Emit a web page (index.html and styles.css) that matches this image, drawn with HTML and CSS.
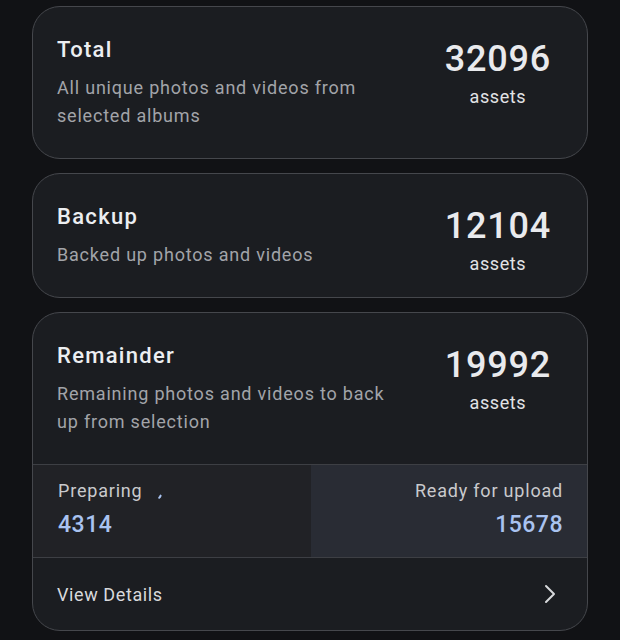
FILE: index.html
```html
<!DOCTYPE html>
<html lang="en">
<head>
    <meta charset="UTF-8">
    <meta name="viewport" content="width=device-width, initial-scale=1.0">
    <title>Backup status</title>
    <link rel="stylesheet" href="styles.css">
</head>
<body>
    <div class="cards">
        <div class="card">
            <div class="card-main">
                <div class="card-text">
                    <h2>Total</h2>
                    <p>All unique photos and videos from selected albums</p>
                </div>
                <div class="count">
                    <span class="count-num">32096</span>
                    <span class="count-unit">assets</span>
                </div>
            </div>
        </div>

        <div class="card">
            <div class="card-main">
                <div class="card-text">
                    <h2>Backup</h2>
                    <p>Backed up photos and videos</p>
                </div>
                <div class="count">
                    <span class="count-num">12104</span>
                    <span class="count-unit">assets</span>
                </div>
            </div>
        </div>

        <div class="card">
            <div class="card-main">
                <div class="card-text">
                    <h2>Remainder</h2>
                    <p>Remaining photos and videos to back up from selection</p>
                </div>
                <div class="count">
                    <span class="count-num">19992</span>
                    <span class="count-unit">assets</span>
                </div>
            </div>

            <div class="split">
                <div class="split-cell">
                    <div class="split-label">
                        Preparing
                        <svg class="spinner" width="14" height="14" viewBox="0 0 14 14">
                            <path d="M5.2 11.8 A5 5 0 0 0 6.6 9.6" fill="none" stroke="#a9c3f0" stroke-width="2" stroke-linecap="round"/>
                        </svg>
                    </div>
                    <div class="split-num">4314</div>
                </div>
                <div class="split-cell ready">
                    <div class="split-label">Ready for upload</div>
                    <div class="split-num">15678</div>
                </div>
            </div>

            <div class="details">
                <span>View Details</span>
                <svg width="14" height="22" viewBox="0 0 14 22">
                    <polyline points="3,3 11,11 3,19" fill="none" stroke="#d8d9dc" stroke-width="2" stroke-linecap="round" stroke-linejoin="round"/>
                </svg>
            </div>
        </div>
    </div>
</body>
</html>
```

FILE: styles.css
```css
* {
    margin: 0;
    padding: 0;
    box-sizing: border-box;
}

body {
    font-family: Roboto, 'Liberation Sans', sans-serif;
    background-color: #111215;
    color: #e6e7ea;
    padding: 6px 32px;
}

.cards {
    display: flex;
    flex-direction: column;
    gap: 14px;
}

.card {
    background-color: #1b1d21;
    border: 1px solid #45474c;
    border-radius: 28px;
    overflow: hidden;
}

.card-main {
    display: flex;
    justify-content: space-between;
    align-items: flex-start;
    padding: 28px 36px 21px 24px;
}

.card-text {
    width: 340px;
    padding-bottom: 7px;
}

.card-text h2 {
    font-size: 22px;
    font-weight: 500;
    line-height: 30px;
    letter-spacing: 1.3px;
    color: #eceef1;
    margin-bottom: 9px;
}

.card-text p {
    font-size: 18px;
    line-height: 28px;
    letter-spacing: 0.8px;
    color: #a2a4a9;
}

.count {
    display: flex;
    flex-direction: column;
    align-items: center;
    padding-top: 5px;
}

.count-num {
    font-size: 36px;
    font-weight: 500;
    line-height: 38px;
    letter-spacing: 0.8px;
    color: #e9eaed;
    margin-bottom: 7px;
}

.count-unit {
    font-size: 18px;
    line-height: 24px;
    letter-spacing: 0.6px;
    color: #e2e3e6;
}

.split {
    display: grid;
    grid-template-columns: 278px 1fr;
    border-top: 1px solid #3d3f44;
    border-bottom: 1px solid #3d3f44;
}

.split-cell {
    background-color: #212226;
    padding: 13px 24px 15px 25px;
}

.split-cell.ready {
    background-color: #292c34;
    text-align: right;
}

.split-label {
    font-size: 18px;
    line-height: 26px;
    letter-spacing: 0.8px;
    color: #c9cacd;
    display: flex;
    align-items: center;
    gap: 12px;
}

.ready .split-label {
    justify-content: flex-end;
}

.spinner {
    margin-top: 4px;
}

.split-num {
    font-size: 23px;
    font-weight: 500;
    line-height: 34px;
    letter-spacing: 0.5px;
    color: #a9c3f0;
    margin-top: 4px;
}

.details {
    display: flex;
    justify-content: space-between;
    align-items: center;
    padding: 0 30px 0 24px;
    height: 72px;
    font-size: 18px;
    letter-spacing: 0.6px;
    color: #d8d9dc;
}
```
